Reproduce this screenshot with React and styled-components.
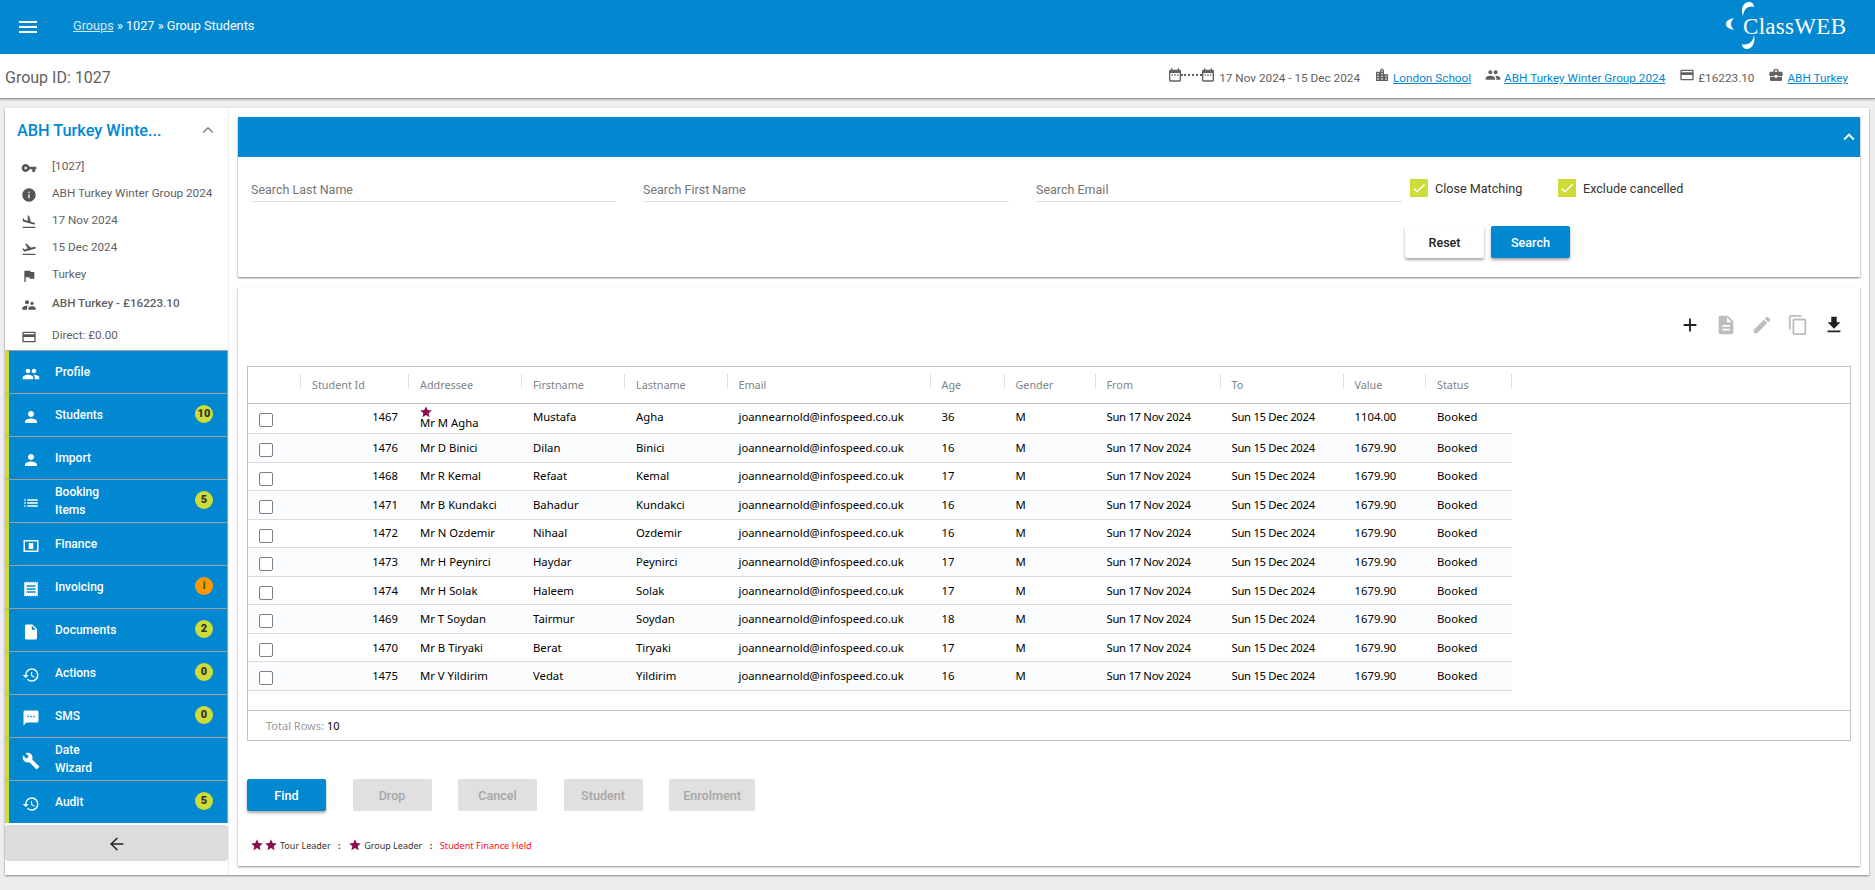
import React from 'react'
import styled, { createGlobalStyle } from 'styled-components'
import { ChevronUp, ArrowLeft } from 'lucide-react'
import {
  MdMenu, MdVpnKey, MdInfo, MdFlightLand, MdFlightTakeoff, MdFlag, MdSupervisorAccount, MdCreditCard,
  MdPeople, MdPerson, MdList, MdReceipt, MdInsertDriveFile, MdHistory, MdTextsms, MdBuild,
  MdAdd, MdDescription, MdEdit, MdContentCopy, MdFileDownload, MdDateRange, MdLocationCity, MdBusinessCenter,
  MdKeyboardArrowUp, MdStar, MdCheck
} from 'react-icons/md'

const BLUE = '#0288d1'
const LIME = '#cddc39'

const Global = createGlobalStyle`
  html, body { margin: 0; padding: 0; background: #eeeeee; }
  body { font-family: Roboto, "Liberation Sans", sans-serif; font-size: 12px; color: #616161; }
`

const Page = styled.div`
  width: 1875px;
  height: 890px;
  overflow: hidden;
  display: flex;
  flex-direction: column;
`

/* top bar */
const TopBar = styled.header`
  height: 54px;
  flex: none;
  background: ${BLUE};
  color: #fff;
  display: flex;
  align-items: center;
  padding: 0 29px 0 16px;
`
const MenuBtn = styled.span`
  display: flex;
  width: 24px;
  margin-right: 33px;
  font-size: 24px;
`
const Crumbs = styled.div`
  flex: 1;
  font-size: 12.7px;
  margin-top: -3px;
  a { color: #d3e9f6; text-decoration: underline; }
`
const Logo = styled.div`
  position: relative;
  width: 120px;
  height: 54px;
  display: flex;
  align-items: center;
  padding-left: 17px;
  box-sizing: border-box;
  font-family: "Liberation Serif", serif;
  font-size: 23px;
  letter-spacing: 0.3px;
  svg { position: absolute; left: 0; top: 0; }
`

/* group summary strip */
const SubBar = styled.div`
  height: 45px;
  flex: none;
  box-sizing: border-box;
  background: #fff;
  border-bottom: 1px solid #9e9e9e;
  box-shadow: 0 1px 2px rgba(0,0,0,.25);
  display: flex;
  align-items: center;
  justify-content: space-between;
  padding: 0 27px 0 5px;
`
const GroupId = styled.div`
  font-size: 16px;
  color: #616161;
  padding-top: 2px;
`
const Facts = styled.div`
  display: flex;
  align-items: center;
  gap: 14px;
  padding-top: 4px;
  font-size: 11.75px;
`
const Fact = styled.div`
  display: flex;
  align-items: center;
  gap: 3px;
  svg { font-size: 16px; color: #616161; margin-top: -7px; }
  a { color: ${BLUE}; text-decoration: underline; }
`
const DateIcons = styled.span`
  display: flex;
  align-items: center;
  i { width: 21px; border-top: 2px dotted #616161; margin: -7px -2px 0; }
`

/* shell */
const Shell = styled.div`
  height: 767px;
  margin: 9px 6px 0 5px;
  background: #fff;
  box-shadow: 0 1px 2px rgba(0,0,0,.45);
  display: grid;
  grid-template-columns: 224px 1fr;
`
const Side = styled.aside`
  display: flex;
  flex-direction: column;
  border-right: 1px solid #ededed;
  box-sizing: border-box;
`
const SideHead = styled.div`
  height: 44px;
  display: flex;
  align-items: center;
  justify-content: space-between;
  padding: 0 11px 0 12px;
  color: #757575;
`
const SideTitle = styled.div`
  font-size: 16.3px;
  font-weight: 500;
  color: ${BLUE};
  white-space: nowrap;
`
const InfoRow = styled.div`
  height: ${p => (p.$tall ? 32 : 27)}px;
  display: flex;
  align-items: center;
  padding-left: 16px;
  font-size: 11.7px;
  font-weight: ${p => (p.$bold ? 500 : 400)};
  svg { flex: none; font-size: 16px; margin: 4px 15px 0 0; color: #555; }
`
const Nav = styled.nav`
  margin-top: -1px;
  display: flex;
  flex-direction: column;
`
const NavItem = styled.div`
  height: 43px;
  box-sizing: border-box;
  background: ${BLUE};
  color: #fff;
  border-left: 4px solid ${LIME};
  border-right: 1px solid #9e9e9e;
  border-top: 1px solid #9e9e9e;
  display: flex;
  align-items: center;
  font-weight: 500;
  font-size: 12px;
  line-height: 18px;
  svg { flex: none; font-size: 18px; margin: 3px 15px 0 13px; }
`
const NavLabel = styled.span`
  flex: 1;
  white-space: pre-line;
  margin-top: -1px;
`
const Badge = styled.span`
  width: 18px;
  height: 18px;
  border-radius: 50%;
  margin: -3px 14px 0 0;
  display: flex;
  align-items: center;
  justify-content: center;
  font-size: 11px;
  font-weight: 900;
  background: ${p => (p.$warn ? '#ff9800' : LIME)};
  color: ${p => (p.$warn ? '#33691e' : '#333')};
`
const BackBtn = styled.div`
  height: 36px;
  box-sizing: border-box;
  padding-top: 2px;
  margin-top: 2px;
  background: #dcdcdc;
  border-radius: 3px;
  color: #212121;
  display: flex;
  align-items: center;
  justify-content: center;
`

/* main column */
const Main = styled.main`
  padding: 9px 9px 0 9px;
  display: flex;
  flex-direction: column;
  gap: 10px;
`
const SearchCard = styled.section`
  height: 160px;
  flex: none;
  background: #fff;
  box-shadow: 0 1px 2px rgba(0,0,0,.5);
`
const CardBar = styled.div`
  height: 40px;
  background: ${BLUE};
  color: #fff;
  display: flex;
  align-items: center;
  justify-content: flex-end;
  padding-right: 0;
  font-size: 22px;
`
const FilterGrid = styled.div`
  display: grid;
  grid-template-columns: 365px 366px 366px auto;
  column-gap: 27px;
  padding: 20px 0 0 13px;
`
const SearchField = styled.input`
  height: 24px;
  padding: 0;
  border: 0;
  border-bottom: 1px solid #e0e0e0;
  outline: none;
  background: transparent;
  font: 12.5px Roboto, sans-serif;
  &::placeholder { color: #757575; opacity: 1; }
`
const Checks = styled.div`
  display: flex;
  margin-left: -19px;
  margin-top: 2px;
`
const CheckItem = styled.label`
  display: flex;
  align-items: center;
  width: 148px;
  height: 18px;
  gap: 7px;
  font-size: 12.6px;
  color: #333;
`
const Tick = styled.span`
  width: 18px;
  height: 18px;
  background: ${LIME};
  color: #fff;
  display: flex;
  align-items: center;
  justify-content: center;
  font-size: 16px;
`
const SearchActions = styled.div`
  display: flex;
  gap: 7px;
  padding: 24px 0 0 1167px;
`
const Btn = styled.button`
  width: ${p => p.$w || 79}px;
  height: 32px;
  border: 0;
  border-radius: 2px;
  padding: 0;
  font: 500 12.6px Roboto, sans-serif;
  background: ${p => (p.$primary ? BLUE : p.$off ? '#e0e0e0' : '#fff')};
  color: ${p => (p.$primary ? '#fff' : p.$off ? '#a6a6a6' : '#222')};
  box-shadow: ${p => (p.$off ? 'none' : '0 2px 3px rgba(0,0,0,.35)')};
`
const ListCard = styled.section`
  height: 579px;
  padding: 20px 9px 0 9px;
  box-sizing: border-box;
  background: #fff;
  box-shadow: 0 1px 2px rgba(0,0,0,.45);
`
const Tools = styled.div`
  display: flex;
  justify-content: flex-end;
  margin: 0 -1px 23px 0;
`
const Tool = styled.span`
  width: 36px;
  height: 36px;
  display: flex;
  align-items: center;
  justify-content: center;
  font-size: 22px;
  color: ${p => (p.$off ? '#bdbdbd' : '#212121')};
`

/* data grid */
const Grid = styled.div`
  height: 375px;
  box-sizing: border-box;
  border: 1px solid #bdc3c7;
  display: flex;
  flex-direction: column;
  font-family: "Noto Sans", sans-serif;
  font-size: 11.3px;
  color: #000;
`
const COLS = '53px 108px 113px 103px 102.5px 203px 74px 91px 125px 123px 82.5px 85.5px'
const HeadRow = styled.div`
  height: 36px;
  flex: none;
  box-sizing: content-box;
  border-bottom: 1px solid #bdc3c7;
  display: grid;
  grid-template-columns: ${COLS};
  color: #7d8388;
  font-size: 10.8px;
`
const HeadCell = styled.div`
  display: flex;
  align-items: center;
  padding: 0 11px 1px 11px;
  background: linear-gradient(#dde0e2, #dde0e2) right 7px / 1px 14px no-repeat;
`
const Rows = styled.div`
  flex: 1;
`
const Row = styled.div`
  height: ${p => (p.$first ? 30 : 28.56)}px;
  box-sizing: border-box;
  width: 1263.5px;
  padding-bottom: ${p => (p.$first ? 3 : 0)}px;
  display: grid;
  grid-template-columns: ${COLS};
  border-bottom: 1px solid #d9dcde;
  background: ${p => (p.$odd ? '#fbfcfd' : '#fff')};
`
const Cell = styled.div`
  display: flex;
  flex-direction: ${p => (p.$stack ? 'column' : 'row')};
  align-items: ${p => (p.$stack ? 'flex-start' : 'center')};
  justify-content: ${p => (p.$right ? 'flex-end' : p.$stack ? 'center' : 'flex-start')};
  padding: 0 11px;
  white-space: nowrap;
  line-height: 14px;
  letter-spacing: ${p => (p.$tight ? '-0.3px' : '0')};
  svg { display: block; font-size: 14px; color: #880e4f; margin: 0 0 -3px -1px; }
`
const CheckCell = styled.div`
  padding: 9px 0 0 11px;
`
const RowCheck = styled.span`
  display: block;
  width: 14px;
  height: 14px;
  box-sizing: border-box;
  border: 1px solid #7a7f85;
  border-radius: 2px;
  background: #fff;
`
const GridFoot = styled.div`
  height: 30px;
  flex: none;
  box-sizing: border-box;
  border-top: 1px solid #bdc3c7;
  display: flex;
  align-items: center;
  padding-left: 18px;
  font-size: 11px;
  color: #9b9b9b;
  b { font-weight: 400; color: #000; margin-left: 3px; }
`
const Actions = styled.div`
  display: flex;
  gap: 26.5px;
  margin-top: 38px;
`
const Legend = styled.div`
  display: flex;
  align-items: center;
  margin: 27px 0 0 3px;
  font-family: "Noto Sans", sans-serif;
  font-size: 9px;
  color: #333;
  svg { font-size: 14px; color: #880e4f; }
`
const LegendText = styled.span`
  margin-left: 2px;
`
const Sep = styled.span`
  margin: 0 7.5px;
  font-weight: 700;
`
const Held = styled.span`
  color: #ff0d1f;
  font-size: 9.2px;
`

// the finance icon reads as a banknote box with a solid middle at this size
const FinanceIcon = () => (
  <svg width="1em" height="1em" viewBox="0 0 24 24" fill="#fff">
    <path d="M2 4h20v16H2V4zm2 2v12h16V6H4z" />
    <rect x="9" y="8" width="6" height="8" />
  </svg>
)

const info = [
  { icon: <MdVpnKey />, text: '[1027]' },
  { icon: <MdInfo />, text: 'ABH Turkey Winter Group 2024' },
  { icon: <MdFlightLand />, text: '17 Nov 2024' },
  { icon: <MdFlightTakeoff />, text: '15 Dec 2024' },
  { icon: <MdFlag />, text: 'Turkey' },
  { icon: <MdSupervisorAccount />, text: 'ABH Turkey - £16223.10', tall: true, bold: true },
  { icon: <MdCreditCard />, text: 'Direct: £0.00', tall: true }
]

const nav = [
  { icon: <MdPeople />, label: 'Profile' },
  { icon: <MdPerson />, label: 'Students', badge: '10' },
  { icon: <MdPerson />, label: 'Import' },
  { icon: <MdList />, label: 'Booking\nItems', badge: '5' },
  { icon: <FinanceIcon />, label: 'Finance' },
  { icon: <MdReceipt />, label: 'Invoicing', badge: 'i', warn: true },
  { icon: <MdInsertDriveFile />, label: 'Documents', badge: '2' },
  { icon: <MdHistory />, label: 'Actions', badge: '0' },
  { icon: <MdTextsms />, label: 'SMS', badge: '0' },
  { icon: <MdBuild />, label: 'Date\nWizard' },
  { icon: <MdHistory />, label: 'Audit', badge: '5' }
]

const heads = ['', 'Student Id', 'Addressee', 'Firstname', 'Lastname', 'Email', 'Age', 'Gender', 'From', 'To', 'Value', 'Status']

const students = [
  ['1467', 'Mr M Agha', 'Mustafa', 'Agha', '36', '1104.00'],
  ['1476', 'Mr D Binici', 'Dilan', 'Binici', '16', '1679.90'],
  ['1468', 'Mr R Kemal', 'Refaat', 'Kemal', '17', '1679.90'],
  ['1471', 'Mr B Kundakci', 'Bahadur', 'Kundakci', '16', '1679.90'],
  ['1472', 'Mr N Ozdemir', 'Nihaal', 'Ozdemir', '16', '1679.90'],
  ['1473', 'Mr H Peynirci', 'Haydar', 'Peynirci', '17', '1679.90'],
  ['1474', 'Mr H Solak', 'Haleem', 'Solak', '17', '1679.90'],
  ['1469', 'Mr T Soydan', 'Tairmur', 'Soydan', '18', '1679.90'],
  ['1470', 'Mr B Tiryaki', 'Berat', 'Tiryaki', '17', '1679.90'],
  ['1475', 'Mr V Yildirim', 'Vedat', 'Yildirim', '16', '1679.90']
]

function App() {
  return (
    <Page>
      <Global />
      <TopBar>
        <MenuBtn><MdMenu /></MenuBtn>
        <Crumbs><a>Groups</a> » 1027 » Group Students</Crumbs>
        <Logo>
          <svg width="120" height="54" viewBox="0 0 120 54" fill="#fff">
            <path d="M17 16C14 8 18 1 24 2C26 2.500 28 4 28 7C22 5 18 9 17 16Z" />
            <path d="M8 18C3 19 0 21 0 24C0 27 3 29 8 30C6 28 5 26 5 24C5 22 6 20 8 18Z" />
            <path d="M28 35C30 42 26 50 20 49C18 48.500 16 47 16 44C22 46 27 42 28 35Z" />
          </svg>
          ClassWEB
        </Logo>
      </TopBar>

      <SubBar>
        <GroupId>Group ID: 1027</GroupId>
        <Facts>
          <Fact>
            <DateIcons><MdDateRange /><i /><MdDateRange /></DateIcons>
            17 Nov 2024 - 15 Dec 2024
          </Fact>
          <Fact><MdLocationCity /><a>London School</a></Fact>
          <Fact><MdPeople /><a>ABH Turkey Winter Group 2024</a></Fact>
          <Fact><MdCreditCard />£16223.10</Fact>
          <Fact><MdBusinessCenter /><a>ABH Turkey</a></Fact>
        </Facts>
      </SubBar>

      <Shell>
        <Side>
          <SideHead>
            <SideTitle>ABH Turkey Winte...</SideTitle>
            <ChevronUp size={18} strokeWidth={1.5} />
          </SideHead>
          {info.map(r => (
            <InfoRow key={r.text} $tall={r.tall} $bold={r.bold}>{r.icon}{r.text}</InfoRow>
          ))}
          <Nav>
            {nav.map(n => (
              <NavItem key={n.label}>
                {n.icon}
                <NavLabel>{n.label}</NavLabel>
                {n.badge && <Badge $warn={n.warn}>{n.badge}</Badge>}
              </NavItem>
            ))}
          </Nav>
          <BackBtn><ArrowLeft size={20} strokeWidth={1.75} /></BackBtn>
        </Side>

        <Main>
          <SearchCard>
            <CardBar><MdKeyboardArrowUp /></CardBar>
            <FilterGrid>
              <SearchField placeholder="Search Last Name" />
              <SearchField placeholder="Search First Name" />
              <SearchField placeholder="Search Email" />
              <Checks>
                <CheckItem><Tick><MdCheck /></Tick>Close Matching</CheckItem>
                <CheckItem><Tick><MdCheck /></Tick>Exclude cancelled</CheckItem>
              </Checks>
            </FilterGrid>
            <SearchActions>
              <Btn>Reset</Btn>
              <Btn $primary>Search</Btn>
            </SearchActions>
          </SearchCard>

          <ListCard>
            <Tools>
              <Tool><MdAdd /></Tool>
              <Tool $off><MdDescription /></Tool>
              <Tool $off><MdEdit /></Tool>
              <Tool $off><MdContentCopy /></Tool>
              <Tool><MdFileDownload /></Tool>
            </Tools>

            <Grid>
              <HeadRow>
                {heads.map((h, i) => <HeadCell key={i}>{h}</HeadCell>)}
              </HeadRow>
              <Rows>
                {students.map((s, i) => (
                  <Row key={s[0]} $first={i === 0} $odd={i % 2 === 1}>
                    <CheckCell><RowCheck /></CheckCell>
                    <Cell $right>{s[0]}</Cell>
                    <Cell $stack={i === 0}>{i === 0 && <MdStar />}{s[1]}</Cell>
                    <Cell>{s[2]}</Cell>
                    <Cell>{s[3]}</Cell>
                    <Cell>joannearnold@infospeed.co.uk</Cell>
                    <Cell>{s[4]}</Cell>
                    <Cell>M</Cell>
                    <Cell $tight>Sun 17 Nov 2024</Cell>
                    <Cell $tight>Sun 15 Dec 2024</Cell>
                    <Cell>{s[5]}</Cell>
                    <Cell>Booked</Cell>
                  </Row>
                ))}
              </Rows>
              <GridFoot>Total Rows:<b>10</b></GridFoot>
            </Grid>

            <Actions>
              <Btn $primary>Find</Btn>
              <Btn $off>Drop</Btn>
              <Btn $off>Cancel</Btn>
              <Btn $off>Student</Btn>
              <Btn $off $w={86}>Enrolment</Btn>
            </Actions>

            <Legend>
              <MdStar /><MdStar />
              <LegendText>Tour Leader</LegendText>
              <Sep>:</Sep>
              <MdStar />
              <LegendText>Group Leader</LegendText>
              <Sep>:</Sep>
              <Held>Student Finance Held</Held>
            </Legend>
          </ListCard>
        </Main>
      </Shell>
    </Page>
  )
}

export default App
